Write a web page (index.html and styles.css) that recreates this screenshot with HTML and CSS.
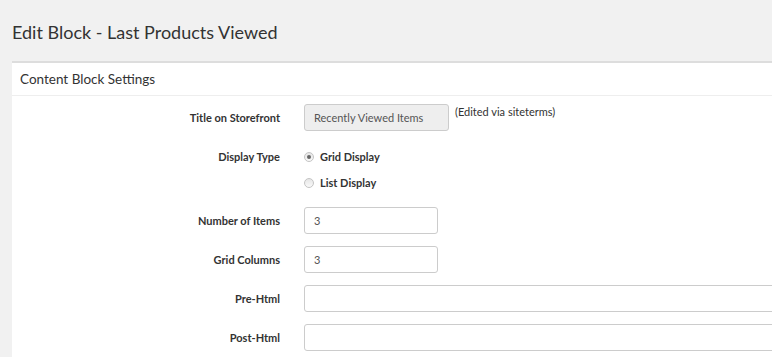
FILE: index.html
```html
<!DOCTYPE html>
<html lang="en">
<head>
<meta charset="UTF-8">
<title>Edit Block - Last Products Viewed</title>
<link rel="stylesheet" href="styles.css">
</head>
<body>

<div class="page">
    <h1>Edit Block - Last Products Viewed</h1>

    <div class="panel">
        <div class="panel-heading">Content Block Settings</div>
        <div class="panel-body">
            <div class="form-row">
                <label class="form-label">Title on Storefront</label>
                <div class="field">
                    <input type="text" class="input input-sm input-disabled" value="Recently Viewed Items" readonly>
                    <span class="hint">(Edited via siteterms)</span>
                </div>
            </div>

            <div class="form-row radio-row">
                <label class="form-label">Display Type</label>
                <div class="radio-list">
                    <label class="radio"><span class="radio-dot checked"></span>Grid Display</label>
                    <label class="radio"><span class="radio-dot"></span>List Display</label>
                </div>
            </div>

            <div class="form-row">
                <label class="form-label">Number of Items</label>
                <div class="field">
                    <input type="text" class="input input-md" value="3">
                </div>
            </div>

            <div class="form-row">
                <label class="form-label">Grid Columns</label>
                <div class="field">
                    <input type="text" class="input input-md" value="3">
                </div>
            </div>

            <div class="form-row">
                <label class="form-label">Pre-Html</label>
                <div class="field">
                    <input type="text" class="input input-wide">
                </div>
            </div>

            <div class="form-row">
                <label class="form-label">Post-Html</label>
                <div class="field">
                    <input type="text" class="input input-wide">
                </div>
            </div>
        </div>
    </div>
</div>

</body>
</html>
```

FILE: styles.css
```css
html, body {
    overflow: hidden;
}
body {
    font-family: "Source Sans Pro", Lato, "Open Sans", sans-serif;
    background-color: #f1f1f1;
    color: #333;
    margin: 0;
    padding: 0;
}
.page {
    padding: 0 0 0 12px;
    width: 900px;
}
h1 {
    font-size: 18px;
    font-weight: normal;
    color: #333;
    margin: 0;
    padding: 21px 0 18px;
    line-height: 22px;
}
.panel {
    background-color: #fff;
    border-top: 2px solid #ddd;
}
.panel-heading {
    font-size: 13.5px;
    padding: 8px 8px 0 8px;
    height: 24px;
    line-height: 16px;
    border-bottom: 1px solid #eee;
}
.panel-body {
    padding: 8px 0 10px;
}
.form-row {
    display: grid;
    grid-template-columns: 268px 1fr;
    column-gap: 24px;
    align-items: center;
    margin-bottom: 12px;
}
.form-label {
    text-align: right;
    font-size: 11px;
    font-weight: bold;
    color: #333;
}
.field {
    display: flex;
    align-items: flex-start;
}
.input {
    font-family: inherit;
    font-size: 11px;
    color: #555;
    height: 27px;
    box-sizing: border-box;
    border: 1px solid #ccc;
    border-radius: 3px;
    padding: 0 9px;
    background-color: #fff;
    outline: none;
}
.input-sm { width: 145px; }
.input-md { width: 134px; }
.input-wide { width: 100%; }
.input-disabled {
    background-color: #eee;
}
.hint {
    font-size: 11px;
    color: #333;
    margin-left: 6px;
    margin-top: 1px;
}
.radio-row {
    align-items: start;
    margin-top: 19px;
    margin-bottom: 17px;
}
.radio-row .form-label {
    line-height: 14px;
}
.radio-list {
    display: flex;
    flex-direction: column;
    gap: 12px;
}
.radio {
    display: flex;
    align-items: center;
    font-size: 11px;
    font-weight: bold;
    line-height: 14px;
    color: #333;
}
.radio-dot {
    width: 8px;
    height: 8px;
    border-radius: 50%;
    border: 1px solid #c4c4c4;
    background: linear-gradient(#e6e6e6, #fafafa);
    margin-right: 6px;
    position: relative;
}
.radio-dot.checked::after {
    content: "";
    position: absolute;
    left: 2px;
    top: 2px;
    width: 4px;
    height: 4px;
    border-radius: 50%;
    background-color: #666;
}
```
